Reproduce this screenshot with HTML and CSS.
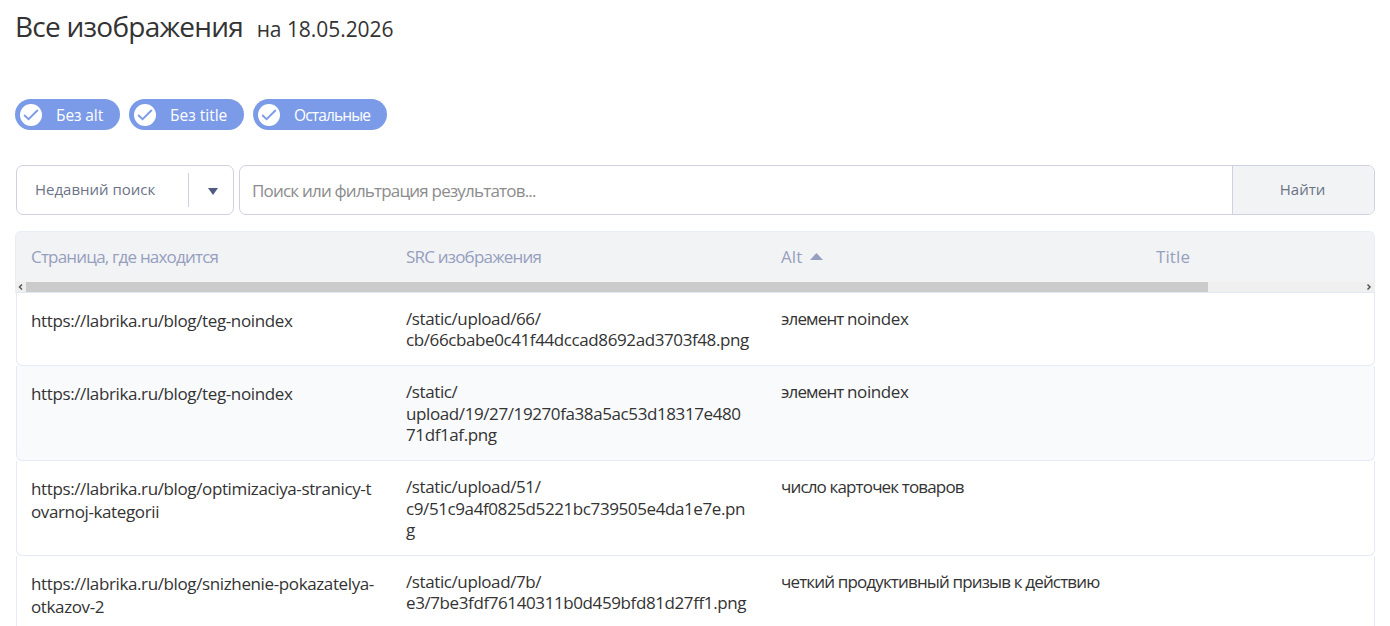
FILE: index.html
```html
<!DOCTYPE html>
<html lang="ru">
<head>
    <meta charset="UTF-8">
    <title>Все изображения</title>
    <link rel="stylesheet" href="styles.css">
</head>
<body>
    <h1>Все изображения <small>на 18.05.2026</small></h1>

    <div class="filters">
        <button class="filter"><svg class="check" viewBox="0 0 21 21"><circle cx="10.5" cy="10.5" r="10.5"/><path d="M4 10.5l4.2 4L17 5.7"/></svg><span>Без alt</span></button>
        <button class="filter filter-title"><svg class="check" viewBox="0 0 21 21"><circle cx="10.5" cy="10.5" r="10.5"/><path d="M4 10.5l4.2 4L17 5.7"/></svg><span>Без title</span></button>
        <button class="filter filter-other"><svg class="check" viewBox="0 0 21 21"><circle cx="10.5" cy="10.5" r="10.5"/><path d="M4 10.5l4.2 4L17 5.7"/></svg><span>Остальные</span></button>
    </div>

    <div class="search">
        <button class="recent"><span class="recent-text">Недавний поиск</span><span class="recent-arrow"><svg width="10" height="7" viewBox="0 0 10 7"><path d="M0 0h10L5 7z"/></svg></span></button>
        <div class="search-box">
            <div class="search-input">Поиск или фильтрация результатов...</div>
            <button class="search-button">Найти</button>
        </div>
    </div>

    <div class="table">
        <div class="table-head">
            <div class="head-cell">Страница, где находится</div>
            <div class="head-cell">SRC изображения</div>
            <div class="head-cell latin">Alt<svg class="sort" width="13" height="7" viewBox="0 0 13 7"><path d="M0 7l6.5-7L13 7z"/></svg></div>
            <div class="head-cell latin">Title</div>
        </div>
        <div class="scrollbar">
            <svg width="10" height="10" viewBox="0 0 10 10"><path d="M6 2.5L3.5 5 6 7.5"/></svg>
            <div class="thumb"></div>
            <svg class="scroll-right" width="10" height="10" viewBox="0 0 10 10"><path d="M3.5 2.5L6 5 3.5 7.5"/></svg>
        </div>
        <div class="row">
            <div class="cell page">https://labrika.ru/blog/teg-noindex</div>
            <div class="cell">/static/upload/66/<br>cb/66cbabe0c41f44dccad8692ad3703f48.png</div>
            <div class="cell alt">элемент <span class="word">noindex</span></div>
        </div>
        <div class="row row-gray">
            <div class="cell page">https://labrika.ru/blog/teg-noindex</div>
            <div class="cell">/static/<br>upload/19/27/19270fa38a5ac53d18317e480<br>71df1af.png</div>
            <div class="cell alt">элемент <span class="word">noindex</span></div>
        </div>
        <div class="row">
            <div class="cell page">https://labrika.ru/blog/optimizaciya-stranicy-t<br>ovarnoj-kategorii</div>
            <div class="cell">/static/upload/51/<br>c9/51c9a4f0825d5221bc739505e4da1e7e.pn<br>g</div>
            <div class="cell alt">число карточек товаров</div>
        </div>
        <div class="row">
            <div class="cell page">https://labrika.ru/blog/snizhenie-pokazatelya-<br>otkazov-2</div>
            <div class="cell">/static/upload/7b/<br>e3/7be3fdf76140311b0d459bfd81d27ff1.png</div>
            <div class="cell alt">четкий продуктивный призыв к действию</div>
        </div>
    </div>
</body>
</html>
```

FILE: styles.css
```css
* {
    box-sizing: border-box;
}

body {
    margin: 0;
    padding: 0 15px;
    height: 626px;
    overflow: hidden;
    background: #fff;
    color: #333;
    font-family: 'Open Sans', 'Noto Sans', sans-serif;
    font-size: 17px;
    white-space: nowrap;
}

button {
    font-family: inherit;
    border: none;
    padding: 0;
    cursor: pointer;
}

h1 {
    margin: 0;
    padding-top: 6px;
    height: 99px;
    font-size: 28px;
    line-height: 40px;
    font-weight: 400;
    letter-spacing: -0.75px;
}

h1 small {
    margin-left: 7px;
    font-size: 21px;
    letter-spacing: -0.05px;
}

.filters {
    display: flex;
    gap: 9px;
}

.filter {
    display: flex;
    align-items: center;
    width: 105px;
    height: 31px;
    padding: 1px 0 0 5px;
    border-radius: 16px;
    background: #7b9be8;
    color: #fff;
    font-size: 15.5px;
    letter-spacing: -0.1px;
}

.filter-title {
    width: 115px;
    letter-spacing: 0;
}

.filter-other {
    width: 134px;
    letter-spacing: -0.85px;
}

.check {
    width: 22px;
    height: 22px;
    margin-right: 14px;
    fill: #fff;
}

.check path {
    fill: none;
    stroke: #7b9be8;
    stroke-width: 1.8;
}

.search {
    display: flex;
    gap: 5px;
    margin: 35px 0 16px;
    padding-left: 1px;
    height: 50px;
}

.recent {
    display: flex;
    align-items: center;
    width: 218px;
    border: 1px solid #d0d0e0;
    border-radius: 7px;
    background: #fff;
    color: #6b7386;
    font-size: 15px;
}

.recent-text {
    width: 171px;
    padding: 0 0 2px 18px;
    text-align: left;
}

.recent-arrow {
    display: flex;
    align-items: center;
    height: 34px;
    padding: 2px 0 0 19px;
    border-left: 1px solid #d0d0e0;
    fill: #4f5b80;
}

.search-box {
    display: flex;
    flex: 1;
    border: 1px solid #d0d0e0;
    border-radius: 7px;
    overflow: hidden;
}

.search-input {
    flex: 1;
    padding-left: 12px;
    line-height: 50px;
    color: #8c8c8c;
    letter-spacing: -0.8px;
}

.search-button {
    width: 142px;
    padding: 0 2px 2px 0;
    border-left: 1px solid #d0d0e0;
    background: #f2f3f5;
    color: #6b7386;
    font-size: 15px;
}

.table {
    display: flex;
    flex-direction: column;
}

.table-head {
    display: flex;
    height: 51px;
    border: 1px solid #e8ecf5;
    border-bottom: none;
    border-radius: 6px 6px 0 0;
    background: #f2f3f5;
    overflow: hidden;
}

.head-cell {
    width: 375px;
    padding-left: 15px;
    line-height: 50px;
    color: #969fbe;
    flex-shrink: 0;
    letter-spacing: -0.8px;
}

.latin {
    letter-spacing: 0.1px;
}

.sort {
    margin-left: 8px;
    vertical-align: 3px;
    fill: #969fbe;
}

.scrollbar {
    display: flex;
    height: 11px;
    padding-left: 1px;
    border-bottom: 1px solid #e3e9f3;
    background: #efefef;
}

.scrollbar svg {
    fill: none;
    stroke: #555;
    stroke-width: 1.5;
}

.thumb {
    width: 1182px;
    background: #cbcbcb;
}

.scroll-right {
    margin-left: auto;
    margin-right: 1px;
}

.row {
    display: flex;
    margin-left: 1px;
    padding: 15px 0 14.8px;
    border: 1px solid #e6eaf6;
    border-top: none;
    border-radius: 0 0 6px 6px;
    line-height: 21.33px;
}

.row-gray {
    background: #f9fafc;
}

.cell {
    width: 375px;
    padding-left: 14px;
    letter-spacing: -0.4px;
}

.page {
    padding-top: 1px;
    line-height: 23px;
    letter-spacing: -0.38px;
}

.alt {
    letter-spacing: -0.85px;
}

.word {
    letter-spacing: -0.4px;
}
```
